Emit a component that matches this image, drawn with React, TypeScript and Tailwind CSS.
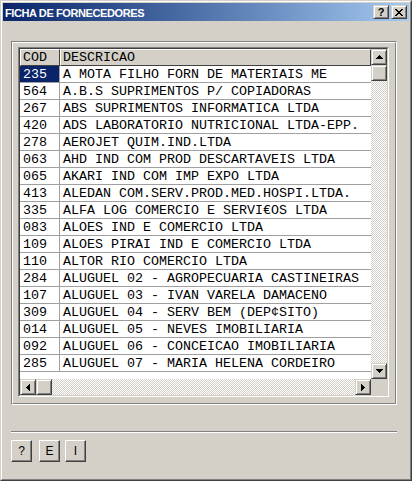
const rows: [string, string][] = [
  ["235", "A MOTA FILHO FORN DE MATERIAIS ME"],
  ["564", "A.B.S SUPRIMENTOS P/ COPIADORAS"],
  ["267", "ABS SUPRIMENTOS INFORMATICA LTDA"],
  ["420", "ADS LABORATORIO NUTRICIONAL LTDA-EPP."],
  ["278", "AEROJET QUIM.IND.LTDA"],
  ["063", "AHD IND COM PROD DESCARTAVEIS LTDA"],
  ["065", "AKARI IND COM IMP EXPO LTDA"],
  ["413", "ALEDAN COM.SERV.PROD.MED.HOSPI.LTDA."],
  ["335", "ALFA LOG COMERCIO E SERVI€OS LTDA"],
  ["083", "ALOES IND E COMERCIO LTDA"],
  ["109", "ALOES PIRAI IND E COMERCIO LTDA"],
  ["110", "ALTOR RIO COMERCIO LTDA"],
  ["284", "ALUGUEL 02 - AGROPECUARIA CASTINEIRAS"],
  ["107", "ALUGUEL 03 - IVAN VARELA DAMACENO"],
  ["309", "ALUGUEL 04 - SERV BEM (DEP¢SITO)"],
  ["014", "ALUGUEL 05 - NEVES IMOBILIARIA"],
  ["092", "ALUGUEL 06 - CONCEICAO IMOBILIARIA"],
  ["285", "ALUGUEL 07 - MARIA HELENA CORDEIRO"],
];

const raised =
  "bg-[#d4d0c8] border border-t-[#d4d0c8] border-l-[#d4d0c8] border-r-[#404040] border-b-[#404040] shadow-[inset_1px_1px_#fff,inset_-1px_-1px_#808080]";

const checker =
  "bg-[repeating-conic-gradient(#ffffff_0%_25%,#d4d0c8_0%_50%)] bg-[length:2px_2px]";

function Arrow({ dir }: { dir: "up" | "down" | "left" | "right" }) {
  const paths = {
    up: "M3 0h1v1h-1z M2 1h3v1h-3z M1 2h5v1h-5z M0 3h7v1h-7z",
    down: "M0 0h7v1h-7z M1 1h5v1h-5z M2 2h3v1h-3z M3 3h1v1h-1z",
    left: "M3 0h1v7h-1z M2 1h1v5h-1z M1 2h1v3h-1z M0 3h1v1h-1z",
    right: "M0 0h1v7h-1z M1 1h1v5h-1z M2 2h1v3h-1z M3 3h1v1h-1z",
  };
  const horiz = dir === "up" || dir === "down";
  return (
    <svg
      width={horiz ? 7 : 4}
      height={horiz ? 4 : 7}
      viewBox={horiz ? "0 0 7 4" : "0 0 4 7"}
      shapeRendering="crispEdges"
    >
      <path d={paths[dir]} fill="#000" />
    </svg>
  );
}

function ScrollBtn({ dir }: { dir: "up" | "down" | "left" | "right" }) {
  return (
    <div className={`w-[16px] h-[16px] flex items-center justify-center ${raised}`}>
      <Arrow dir={dir} />
    </div>
  );
}

function CloseGlyph() {
  return (
    <svg width="8" height="7" viewBox="0 0 8 7" shapeRendering="crispEdges">
      <path
        d="M0 0h2v1h-2z M6 0h2v1h-2z M1 1h2v1h-2z M5 1h2v1h-2z M2 2h4v1h-4z M3 3h2v1h-2z M2 4h4v1h-4z M1 5h2v1h-2z M5 5h2v1h-2z M0 6h2v1h-2z M6 6h2v1h-2z"
        fill="#000"
      />
    </svg>
  );
}

export default function App() {
  return (
    <div className="w-[412px] h-[481px] bg-[#d4d0c8] border border-t-[#d4d0c8] border-l-[#d4d0c8] border-r-[#404040] border-b-[#404040]">
      <div className="h-full border border-t-white border-l-white border-r-[#808080] border-b-[#808080] p-px flex flex-col">
        {/* title bar */}
        <div className="h-[18px] flex items-center bg-linear-to-r from-[#0a246a] to-[#a6caf0] pl-[2px] pr-[2px]">
          <span className="text-white font-bold text-[11px] leading-[18px] pt-px tracking-[-0.4px] font-['Liberation_Sans',sans-serif]">
            FICHA DE FORNECEDORES
          </span>
          <div className="ml-auto flex gap-[2px]">
            <div className={`w-[16px] h-[14px] flex items-center justify-center ${raised}`}>
              <span className="text-black font-bold text-[11px] leading-[11px] font-['Liberation_Sans',sans-serif]">
                ?
              </span>
            </div>
            <div className={`w-[16px] h-[14px] flex items-center justify-center ${raised}`}>
              <CloseGlyph />
            </div>
          </div>
        </div>

        <div className="pl-[8px] pt-[20px]">
          {/* group box */}
          <div className="w-[386px] h-[364px] border border-t-[#808080] border-l-[#808080] border-r-white border-b-white">
            <div className="h-full border border-t-white border-l-white border-r-[#808080] border-b-[#808080] pl-[5px] pt-[4px]">
              {/* grid */}
              <div className="w-[371px] h-[350px] border border-t-[#808080] border-l-[#808080] border-r-white border-b-white">
                <div className="h-full border border-t-[#404040] border-l-[#404040] border-r-[#d4d0c8] border-b-[#d4d0c8] grid grid-cols-[351px_16px] grid-rows-[330px_16px]">
                  <div className="bg-white overflow-hidden font-['Liberation_Mono',monospace] text-[13.33px] text-black">
                    <div className="flex h-[17px]">
                      <div className="w-[40px] shrink-0 bg-[#d4d0c8] border border-t-white border-l-white border-r-[#404040] border-b-[#404040] pl-[2px] pt-px leading-[14px]">
                        COD
                      </div>
                      <div className="w-[311px] shrink-0 bg-[#d4d0c8] border border-t-white border-l-white border-r-[#404040] border-b-[#404040] pl-[2px] pt-px leading-[14px]">
                        DESCRICAO
                      </div>
                    </div>
                    {rows.map(([cod, desc], i) => (
                      <div key={cod} className="flex h-[17px] border-b border-[#a0a0a0]">
                        <div
                          className={`w-[40px] shrink-0 border-r border-[#a0a0a0] pl-[3px] pt-[2px] leading-[14px] whitespace-pre ${
                            i === 0 ? "bg-[#0a246a] text-white" : ""
                          }`}
                        >
                          {cod}
                        </div>
                        <div className="flex-1 pl-[3px] pt-[2px] leading-[14px] whitespace-pre overflow-hidden">
                          {desc}
                        </div>
                      </div>
                    ))}
                  </div>
                  {/* vertical scrollbar */}
                  <div className="flex flex-col">
                    <ScrollBtn dir="up" />
                    <div className={`w-[16px] h-[16px] ${raised}`} />
                    <div className={`flex-1 ${checker}`} />
                    <ScrollBtn dir="down" />
                  </div>
                  {/* horizontal scrollbar */}
                  <div className="flex">
                    <ScrollBtn dir="left" />
                    <div className={`w-[16px] h-[16px] ${raised}`} />
                    <div className={`flex-1 ${checker}`} />
                    <ScrollBtn dir="right" />
                  </div>
                  <div className="bg-[#d4d0c8]" />
                </div>
              </div>
            </div>
          </div>

          {/* separator */}
          <div className="mt-[26px] w-[386px] h-[2px] border-t border-t-[#808080] border-b border-b-white" />

          {/* buttons */}
          <div className="mt-[7px] flex font-['Liberation_Sans',sans-serif] text-[12px] text-black">
            <button className="w-[21px] h-[22px] bg-[#d4d0c8] border border-t-white border-l-white border-r-[#404040] border-b-[#404040] shadow-[inset_-1px_-1px_#808080] flex items-center justify-center">
              ?
            </button>
            <button className="ml-[7px] w-[21px] h-[22px] bg-[#d4d0c8] border border-t-white border-l-white border-r-[#404040] border-b-[#404040] shadow-[inset_-1px_-1px_#808080] flex items-center justify-center">
              E
            </button>
            <button className="ml-[5px] w-[21px] h-[22px] bg-[#d4d0c8] border border-t-white border-l-white border-r-[#404040] border-b-[#404040] shadow-[inset_-1px_-1px_#808080] flex items-center justify-center">
              I
            </button>
          </div>
        </div>
      </div>
    </div>
  );
}
